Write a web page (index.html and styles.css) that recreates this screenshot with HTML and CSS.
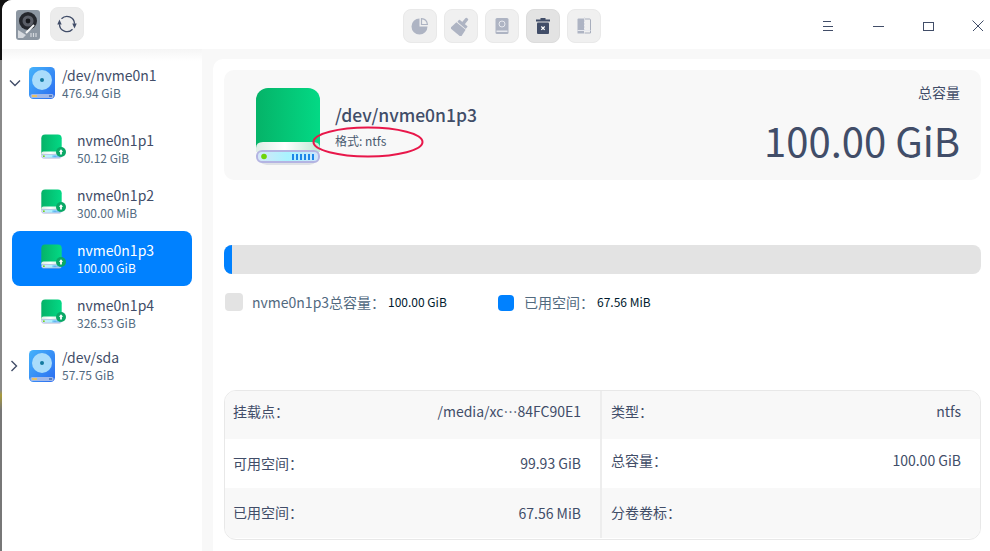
FILE: index.html
```html
<!DOCTYPE html>
<html lang="zh-CN">
<head>
    <meta charset="UTF-8">
    <meta name="viewport" content="width=device-width, initial-scale=1.0">
    <title>分区编辑器</title>
    <link rel="stylesheet" href="styles.css">
</head>
<body>
    <svg class="icon-defs" aria-hidden="true">
        <defs>
            <linearGradient id="green-body" x1="0" y1="0" x2="1" y2="0">
                <stop offset="0" stop-color="#05b368"/>
                <stop offset="1" stop-color="#03d985"/>
            </linearGradient>
            <linearGradient id="green-slot" x1="0" y1="0" x2="1" y2="0">
                <stop offset="0" stop-color="#dfeee6"/>
                <stop offset=".45" stop-color="#ffffff"/>
                <stop offset="1" stop-color="#bfe8d4"/>
            </linearGradient>
            <linearGradient id="green-tray" x1="0" y1="0" x2="1" y2="0">
                <stop offset="0" stop-color="#d7e6f7"/>
                <stop offset=".5" stop-color="#a9f3ff"/>
                <stop offset="1" stop-color="#cfe4fb"/>
            </linearGradient>
            <linearGradient id="blue-body" x1="0" y1="0" x2="1" y2="1">
                <stop offset="0" stop-color="#45b3fb"/>
                <stop offset="1" stop-color="#2b6cf0"/>
            </linearGradient>
        </defs>
        <symbol id="disk-green" viewBox="0 0 66 78">
            <rect x="2" y="3" width="62" height="75" rx="10" fill="#8f9bb0" opacity=".25"/>
            <path d="M1 13a12 12 0 0 1 12-12h40a12 12 0 0 1 12 12v52H1z" fill="url(#green-body)"/>
            <path d="M1 65v-4q0-6 7-6h50q7 0 7 6v4z" fill="url(#green-slot)"/>
            <rect x="2" y="64" width="62" height="11" rx="5" fill="url(#green-tray)" stroke="#b4b4e2" stroke-width="2"/>
            <circle cx="9" cy="69.500" r="2.800" fill="#6ed40a"/>
            <path d="M38 67v6M42 67v6M46 67v6M50 67v6M54 67v6M58 67v6" stroke="#1e86e8" stroke-width="2"/>
        </symbol>
        <symbol id="disk-blue" viewBox="0 0 26 32">
            <rect width="26" height="32" rx="4.500" fill="url(#blue-body)"/>
            <circle cx="13" cy="13" r="10" fill="#a9dcfb"/>
            <circle cx="13" cy="13" r="2" fill="#14799f"/>
            <rect x="1.500" y="27" width="23" height="4" rx="1.500" fill="#9fb8ea"/>
            <rect x="3" y="28" width="5" height="2" fill="#e6c268"/>
            <rect x="20" y="28" width="3" height="2" fill="#5a7fc0"/>
        </symbol>
        <symbol id="up-badge" viewBox="0 0 10 10">
            <circle cx="5" cy="5" r="5" fill="#0aa866"/>
            <path d="M5 2.200 7.200 4.800H5.900V7.600H4.100V4.800H2.800z" fill="#fff"/>
        </symbol>
    </svg>

    <div class="window">
        <header class="titlebar">
            <div class="bar-left">
                <svg class="app-logo" viewBox="0 0 24 30">
                    <rect width="24" height="30" rx="3" fill="#8d97a2"/>
                    <circle cx="12" cy="11" r="9" fill="#25272d"/>
                    <circle cx="12" cy="11" r="5.500" fill="#5b5e67"/>
                    <circle cx="12" cy="11" r="2.400" fill="#17181c"/>
                    <path d="M18 15 10 23" stroke="#f6f7f8" stroke-width="2"/>
                    <path d="M2 20l8 5-3 3H2z" fill="#d5d9de"/>
                    <path d="M15 23v4M17.500 23v4M20 23v4" stroke="#d5d9de" stroke-width="1.200"/>
                </svg>
                <button class="tool-btn">
                    <svg class="tool-icon" viewBox="0 0 20 20" fill="none" stroke="#414d68" stroke-width="1.300">
                        <path d="M4.500 4.800A7.500 7.500 0 0 1 17.500 9.800"/>
                        <path d="M15.500 15.200A7.500 7.500 0 0 1 2.500 10.200"/>
                        <path d="M2.500 5.500 .3 10.500H4.700z" fill="#414d68" stroke="none"/>
                        <path d="M17.500 14.500 15.300 9.500H19.700z" fill="#414d68" stroke="none"/>
                    </svg>
                </button>
            </div>
            <div class="bar-center">
                <button class="tool-btn">
                    <svg class="tool-icon" viewBox="0 0 20 20">
                        <path d="M9.500 2.500V10.500H17.500A8 8 0 1 1 9.500 2.500z" fill="#aeb4c3"/>
                        <path d="M11.500 2.700A6.500 6.500 0 0 1 17.400 8.500H11.500z" fill="#f0f0f0" stroke="#aeb4c3" stroke-width="1.200"/>
                    </svg>
                </button>
                <button class="tool-btn">
                    <svg class="tool-icon" viewBox="0 0 20 20">
                        <g transform="rotate(40 10 10)" fill="#aeb4c3">
                            <rect x="8.300" y="0" width="3.400" height="7" rx="1.200"/>
                            <rect x="4.500" y="6" width="11" height="3.200" rx=".8"/>
                            <path d="M4 10h12l1 8.500H3z"/>
                        </g>
                    </svg>
                </button>
                <button class="tool-btn">
                    <svg class="tool-icon" viewBox="0 0 20 20">
                        <rect x="3.500" y="2" width="13" height="16" rx="1.500" fill="#aeb4c3"/>
                        <rect x="4.500" y="14.500" width="11" height="1.500" fill="#e6e8ee"/>
                        <circle cx="10" cy="8" r="3" fill="none" stroke="#e6e8ee" stroke-width="1"/>
                    </svg>
                </button>
                <button class="tool-btn tool-btn-active">
                    <svg class="tool-icon" viewBox="0 0 20 20">
                        <path d="M7.500 2h5v1.500H17V5.500H3V3.500H7.500z" fill="#414d68"/>
                        <rect x="4" y="6.500" width="12" height="11.500" rx="1" fill="#414d68"/>
                        <path d="M8.300 10.500l3.400 3.400M11.700 10.500l-3.400 3.400" stroke="#fff" stroke-width="1.200"/>
                    </svg>
                </button>
                <button class="tool-btn">
                    <svg class="tool-icon" viewBox="0 0 20 20">
                        <path d="M3.500 3.500a1 1 0 0 1 1-1H10V17.500H3.500z" fill="#aeb4c3"/>
                        <path d="M10.500 3H15.500a1 1 0 0 1 1 1V17H10.500" fill="none" stroke="#a8aebd" stroke-width="1"/>
                        <path d="M10.500 1v18" stroke="#dfe1e6" stroke-width="1" stroke-dasharray="2 1"/>
                        <rect x="3.500" y="14" width="13" height="1" fill="#e6e8ee"/>
                    </svg>
                </button>
            </div>
            <div class="bar-right">
                <button class="win-btn">
                    <svg class="win-icon" viewBox="0 0 12 12" stroke="#414d68" stroke-width="1" fill="none">
                        <path d="M1 2.500h8M1 7.500h10M1 11.500h10"/>
                    </svg>
                </button>
                <button class="win-btn">
                    <svg class="win-icon" viewBox="0 0 12 12" stroke="#414d68" stroke-width="1" fill="none">
                        <path d="M1 7.500h11"/>
                    </svg>
                </button>
                <button class="win-btn">
                    <svg class="win-icon" viewBox="0 0 12 12" stroke="#414d68" stroke-width="1" fill="none">
                        <rect x="1.500" y="3.500" width="10" height="8"/>
                    </svg>
                </button>
                <button class="win-btn win-close">
                    <svg class="win-icon" viewBox="0 0 12 12" stroke="#414d68" stroke-width="1" fill="none">
                        <path d="M.5 1.500l11 11M11.500 1.500l-11 11"/>
                    </svg>
                </button>
            </div>
        </header>

        <div class="main">
            <aside class="sidebar">
                <div class="device-row device-first">
                    <svg class="chevron" viewBox="0 0 12 12"><path d="M1 3.500 6 8.500 11 3.500" fill="none" stroke="#414d68" stroke-width="1.400"/></svg>
                    <svg class="disk-blue"><use href="#disk-blue"/></svg>
                    <div class="row-text">
                        <div class="row-name">/dev/nvme0n1</div>
                        <div class="row-size">476.94 GiB</div>
                    </div>
                </div>

                <div class="part-row">
                    <div class="part-icon"><svg class="disk-small"><use href="#disk-green"/></svg><svg class="badge"><use href="#up-badge"/></svg></div>
                    <div class="row-text">
                        <div class="row-name">nvme0n1p1</div>
                        <div class="row-size">50.12 GiB</div>
                    </div>
                </div>
                <div class="part-row">
                    <div class="part-icon"><svg class="disk-small"><use href="#disk-green"/></svg><svg class="badge"><use href="#up-badge"/></svg></div>
                    <div class="row-text">
                        <div class="row-name">nvme0n1p2</div>
                        <div class="row-size">300.00 MiB</div>
                    </div>
                </div>
                <div class="part-row part-selected">
                    <div class="part-icon"><svg class="disk-small"><use href="#disk-green"/></svg><svg class="badge"><use href="#up-badge"/></svg></div>
                    <div class="row-text">
                        <div class="row-name">nvme0n1p3</div>
                        <div class="row-size">100.00 GiB</div>
                    </div>
                </div>
                <div class="part-row">
                    <div class="part-icon"><svg class="disk-small"><use href="#disk-green"/></svg><svg class="badge"><use href="#up-badge"/></svg></div>
                    <div class="row-text">
                        <div class="row-name">nvme0n1p4</div>
                        <div class="row-size">326.53 GiB</div>
                    </div>
                </div>

                <div class="device-row device-last">
                    <svg class="chevron" viewBox="0 0 12 12"><path d="M2.500 1 7.500 6 2.500 11" fill="none" stroke="#414d68" stroke-width="1.400"/></svg>
                    <svg class="disk-blue"><use href="#disk-blue"/></svg>
                    <div class="row-text">
                        <div class="row-name">/dev/sda</div>
                        <div class="row-size">57.75 GiB</div>
                    </div>
                </div>
            </aside>

            <section class="content">
                <div class="summary">
                    <svg class="disk-large"><use href="#disk-green"/></svg>
                    <div class="summary-info">
                        <div class="summary-name">/dev/nvme0n1p3</div>
                        <div class="summary-format">格式: ntfs</div>
                    </div>
                    <div class="summary-total">
                        <div class="total-label">总容量</div>
                        <div class="total-value">100.00 GiB</div>
                    </div>
                    <svg class="mark" viewBox="0 0 112 32"><ellipse cx="56" cy="16" rx="54.500" ry="14.500" fill="none" stroke="#e8174a" stroke-width="2"/></svg>
                </div>

                <div class="usage-bar"><div class="usage-fill"></div></div>

                <div class="legend">
                    <span class="swatch swatch-total"></span>
                    <span class="legend-label legend-label-total">nvme0n1p3总容量：</span>
                    <span class="legend-value legend-value-total">100.00 GiB</span>
                    <span class="swatch swatch-used"></span>
                    <span class="legend-label">已用空间：</span>
                    <span class="legend-value legend-value-used">67.56 MiB</span>
                </div>

                <div class="info-table">
                    <div class="info-row info-row-first">
                        <div class="info-cell"><span>挂载点：</span><span>/media/xc⋯84FC90E1</span></div>
                        <div class="info-cell info-cell-right"><span>类型：</span><span>ntfs</span></div>
                    </div>
                    <div class="info-row info-row-plain">
                        <div class="info-cell"><span>可用空间：</span><span>99.93 GiB</span></div>
                        <div class="info-cell info-cell-right info-cell-raised"><span>总容量：</span><span>100.00 GiB</span></div>
                    </div>
                    <div class="info-row info-row-last">
                        <div class="info-cell"><span class="info-label-up">已用空间：</span><span>67.56 MiB</span></div>
                        <div class="info-cell info-cell-right"><span class="info-label-up">分卷卷标：</span><span></span></div>
                    </div>
                </div>
            </section>
        </div>
    </div>
</body>
</html>
```

FILE: styles.css
```css
* {
    box-sizing: border-box;
}

html, body {
    height: 100%;
}

body {
    margin: 0;
    overflow: hidden;
    font-family: "Noto Sans CJK SC", "Noto Sans", sans-serif;
    color: #414d68;
    background: linear-gradient(#111 0, #111 60px, #8a8a8a 60px, #8a8a8a 390px, #a89a3a 395px, #777 410px);
}

.icon-defs {
    position: absolute;
    width: 0;
    height: 0;
}

.window {
    display: flex;
    flex-direction: column;
    height: 551px;
    margin-left: 2px;
    background-color: #f8f8f8;
    border-top-left-radius: 10px;
    overflow: hidden;
}

/* title bar */
.titlebar {
    display: flex;
    align-items: center;
    height: 49px;
    flex-shrink: 0;
    background-color: #fff;
}

.bar-left {
    display: flex;
    align-items: center;
    width: 401px;
    padding-left: 14px;
    gap: 10px;
}

.app-logo {
    width: 24px;
    height: 30px;
}

.bar-center {
    display: flex;
    gap: 7px;
    padding-top: 2px;
}

.bar-right {
    flex: 1;
    display: flex;
    justify-content: flex-end;
}

.tool-btn {
    display: flex;
    align-items: center;
    justify-content: center;
    width: 34px;
    height: 34px;
    padding: 0;
    border: 1px solid #e9e9e9;
    border-radius: 8px;
    background-color: #f0f0f0;
}

.bar-left .tool-btn {
    margin-top: -2px;
    background-color: #ececec;
}

.tool-btn-active {
    background-color: #e3e3e3;
    border-color: #dcdcdc;
}

.tool-icon {
    width: 20px;
    height: 20px;
}

.win-btn {
    display: flex;
    align-items: center;
    justify-content: center;
    width: 50px;
    height: 48px;
    padding: 0;
    border: none;
    background: none;
}

.win-close {
    margin-right: -13px;
}

.win-icon {
    width: 12px;
    height: 12px;
}

/* body */
.main {
    flex: 1;
    display: flex;
    min-height: 0;
}

.sidebar {
    width: 200px;
    padding-top: 9px;
    background: linear-gradient(#f5f5f5, #fff 12px);
}

.device-row {
    display: flex;
    align-items: center;
    height: 50px;
    padding-left: 7px;
}

.device-first {
    margin-bottom: 13px;
}

.device-last .row-text {
    margin-top: -2px;
}

.chevron {
    width: 12px;
    height: 12px;
    margin-right: 8px;
}

.disk-blue {
    width: 26px;
    height: 32px;
    margin-right: 7px;
}

.row-text {
    display: flex;
    flex-direction: column;
}

.row-name {
    font-size: 14px;
    line-height: 18px;
    margin-bottom: 1px;
}

.row-size {
    font-size: 12px;
    line-height: 16px;
    color: #526a7f;
}

.part-row {
    display: flex;
    align-items: center;
    height: 55px;
    margin: 0 10px;
    padding-left: 29px;
    border-radius: 8px;
}

.part-selected {
    background-color: #0081ff;
}

.part-selected .row-name,
.part-selected .row-size {
    color: #fff;
}

.part-icon {
    position: relative;
    width: 21px;
    height: 25px;
    margin: -5px 15px 0 0;
}

.disk-small {
    display: block;
    width: 21px;
    height: 25px;
}

.badge {
    position: absolute;
    right: -4px;
    top: 13px;
    width: 10px;
    height: 10px;
}

.content {
    flex: 1;
    margin: 10px 0 0 11px;
    padding: 11px 9px 0 11px;
    background-color: #fff;
    border-top-left-radius: 10px;
}

.summary {
    position: relative;
    display: flex;
    height: 110px;
    padding: 17px 21px 0 31px;
    background-color: #f8f8f8;
    border-radius: 10px;
}

.disk-large {
    width: 66px;
    height: 78px;
    flex-shrink: 0;
    margin-right: 14px;
}

.summary-info {
    flex: 1;
    padding-top: 16px;
}

.summary-name {
    font-size: 17.500px;
    font-weight: 500;
    line-height: 24px;
}

.summary-format {
    margin-top: 4px;
    font-size: 12px;
    line-height: 20px;
    color: #4a5a70;
}

.summary-total {
    text-align: right;
}

.total-label {
    font-size: 14px;
    line-height: 20px;
    margin-top: -5px;
}

.total-value {
    font-size: 40px;
    line-height: 56px;
    margin-top: 10px;
}

.mark {
    position: absolute;
    left: 88px;
    top: 56px;
    width: 112px;
    height: 32px;
}

.usage-bar {
    height: 29px;
    margin-top: 65px;
    background-color: #e3e3e3;
    border-radius: 8px;
    overflow: hidden;
}

.usage-fill {
    width: 8px;
    height: 100%;
    background-color: #0081ff;
}

.legend {
    display: flex;
    align-items: center;
    height: 20px;
    margin-top: 18px;
    padding-left: 1px;
}

.swatch {
    flex-shrink: 0;
    border-radius: 4px;
}

.swatch-total {
    width: 18px;
    height: 18px;
    margin-right: 9px;
    background-color: #e3e3e3;
}

.swatch-used {
    width: 16px;
    height: 16px;
    margin: 2px 10px 0 0;
    background-color: #0081ff;
}

.legend-label {
    font-size: 14px;
    line-height: 20px;
    color: #526a7f;
}

.legend-label-total {
    width: 136px;
}

.legend-value {
    font-size: 12px;
    line-height: 20px;
    color: #001a2e;
}

.legend-value-total {
    width: 110px;
}

.legend-value-used {
    margin-left: 3px;
}

.info-table {
    height: 150px;
    margin-top: 78px;
    border: 1px solid #e8e8e8;
    border-radius: 12px;
    overflow: hidden;
    font-size: 14px;
}

.info-row {
    display: flex;
    height: 49px;
    background-color: #f8f8f8;
}

.info-row-first {
    height: 48px;
}

.info-row-plain {
    background-color: #fff;
}

.info-row-last {
    height: 50px;
}

.info-cell {
    display: flex;
    align-items: center;
    justify-content: space-between;
    width: 375px;
    padding: 0 19px 2px 8px;
}

.info-cell-right {
    flex: 1;
    width: auto;
    padding-left: 9px;
    border-left: 2px solid #ededed;
}

.info-row-first .info-cell,
.info-cell-raised {
    padding-bottom: 8px;
}

.info-row-last .info-cell {
    padding-bottom: 0;
}

.info-label-up {
    margin-bottom: 3px;
}
```
